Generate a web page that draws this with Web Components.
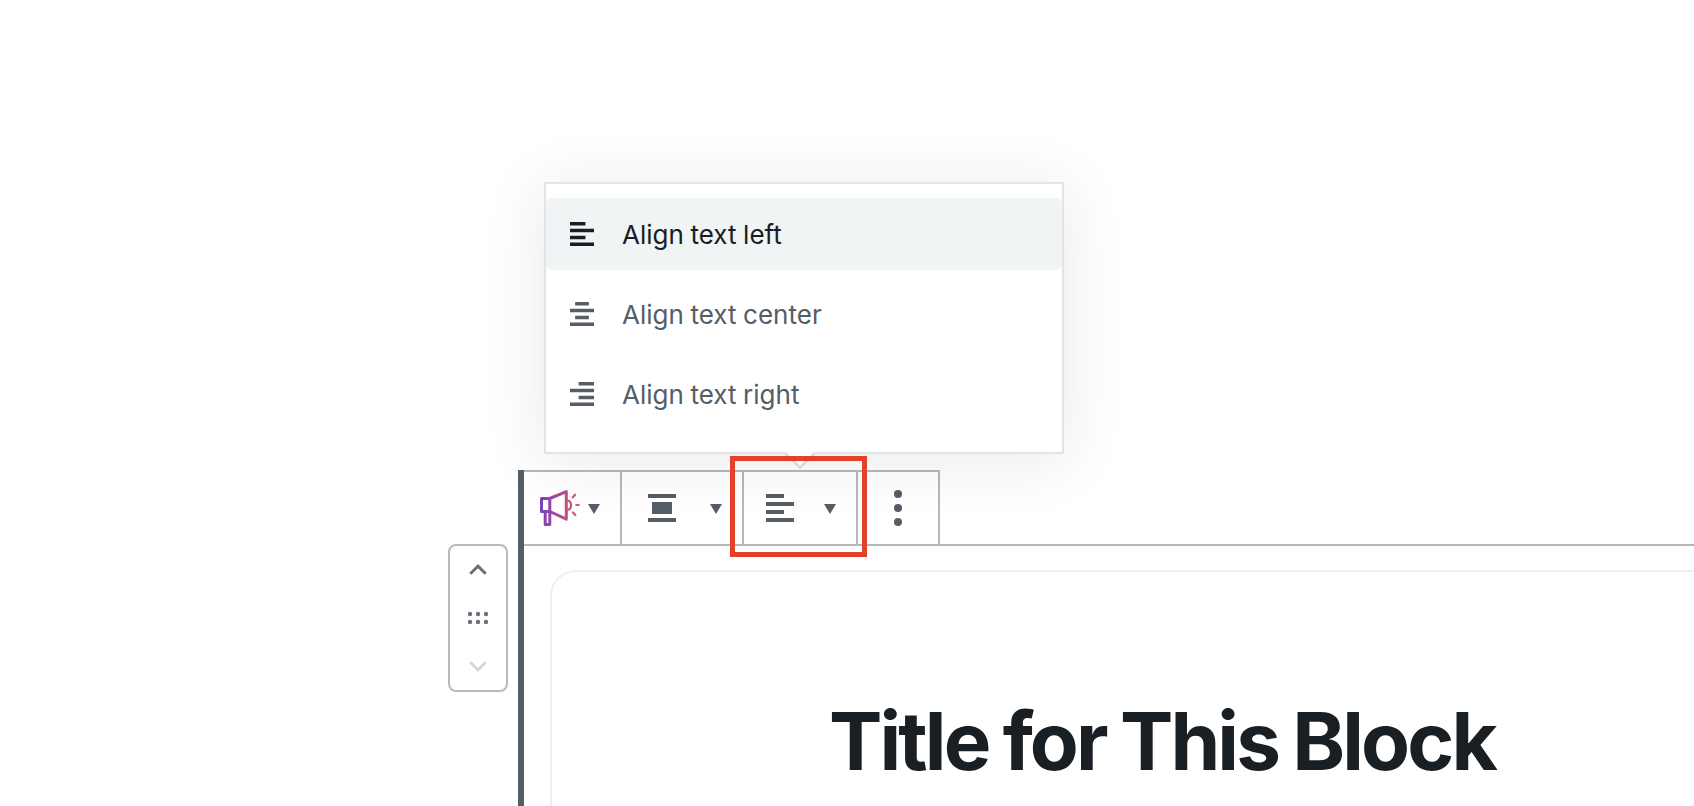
<!DOCTYPE html>
<html lang="en">
<head>
<meta charset="utf-8">
<title>Block editor</title>
<style>
html,body{margin:0;height:100%;overflow:hidden;background:#fff}
body{font-family:Inter,"Liberation Sans",sans-serif;color:#1a1f24}
</style>
</head>
<body>
<block-editor></block-editor>
<script>
const define = (name, html) => customElements.define(name, class extends HTMLElement {
  constructor() {
    super();
    const t = document.createElement('template');
    t.innerHTML = html;
    this.attachShadow({mode: 'open'}).append(t.content.cloneNode(true));
  }
});

const ALIGN = {
  left: 'M0 0h9v2H0zM0 4h14v2H0zM0 8h9v2H0zM0 12h14v2H0z',
  center: 'M3 0h8v2H3zM0 4h14v2H0zM3 8h8v2H3zM0 12h14v2H0z',
  right: 'M5 0h9v2H5zM0 4h14v2H0zM5 8h9v2H5zM0 12h14v2H0z',
  block: 'M0 0h14v2H0zM2 4h10v6H2zM0 12h14v2H0z'
};
customElements.define('align-icon', class extends HTMLElement {
  constructor() {
    super();
    this.attachShadow({mode: 'open'}).innerHTML = `
      <style>:host{display:block;width:28px;height:28px;flex:none}svg{display:block;width:100%;height:100%}</style>
      <svg viewBox="0 0 14 14" fill="currentColor"><path d="${ALIGN[this.getAttribute('kind')]}"/></svg>`;
  }
});

define('drop-arrow', `
<style>:host{display:block;width:12px;height:10px;flex:none;margin-top:2px}svg{display:block}</style>
<svg width="12" height="10" fill="currentColor"><path d="M0 0h12L6 10z"/></svg>`);

define('megaphone-icon', `
<style>:host{display:block;width:40px;height:38px;flex:none}svg{display:block}</style>
<svg width="40" height="38" viewBox="0 0 40 38" fill="none" stroke="url(#g)" stroke-width="3" stroke-linejoin="round" stroke-linecap="round">
<defs><linearGradient id="g" gradientUnits="userSpaceOnUse" x1="0" y1="0" x2="40" y2="0"><stop stop-color="#7b3fc2"/><stop offset=".65" stop-color="#bd5082"/><stop offset="1" stop-color="#d9606c"/></linearGradient></defs>
<path d="M1.500 9.500h8.300v13H1.500zM9.800 9.500L26.300 2.600v27.600L9.800 22.500M5.200 22.500v13h4.600v-13"/>
<path d="M27.500 11.500c4.700 .500 4.700 9 0 9.500M32.800 8.300l2.300-2.600M36.300 16h2.500M33 23.500l2.300 2.500" stroke-width="2.200"/></svg>`);

define('tool-group', `
<style>:host{display:flex;align-items:center;box-sizing:border-box;height:72px;border-right:2px solid #b4b9be;color:#555d66}</style><slot></slot>`);

define('block-toolbar', `
<style>
:host{display:flex;box-sizing:border-box;width:416px;height:74px;border-top:2px solid #b4b9be}
.a{width:98px;padding-left:16px;gap:8px}.b{width:122px;padding-left:26px;gap:34px}
.c{width:114px;padding-left:22px;gap:30px}.d{width:82px;padding-left:36px}
svg{display:block}
</style>
<tool-group class="a"><megaphone-icon></megaphone-icon><drop-arrow></drop-arrow></tool-group>
<tool-group class="b"><align-icon kind="block"></align-icon><drop-arrow></drop-arrow></tool-group>
<tool-group class="c"><align-icon kind="left"></align-icon><drop-arrow></drop-arrow></tool-group>
<tool-group class="d"><svg width="8" height="36" fill="currentColor"><circle cx="4" cy="4" r="4"/><circle cx="4" cy="18" r="4"/><circle cx="4" cy="32" r="4"/></svg></tool-group>`);

define('block-mover', `
<style>:host{display:block;box-sizing:border-box;width:60px;height:148px;border:2px solid #b5bcbe;border-radius:8px;background:#fff}svg{display:block}</style>
<svg width="56" height="144" fill="none" stroke-width="3">
<path d="M20.300 27.700L28 20.200l7.700 7.500" stroke="#6b7078"/>
<g fill="#6b7078"><circle cx="20" cy="68" r="2.200"/><circle cx="28" cy="68" r="2.200"/><circle cx="36" cy="68" r="2.200"/><circle cx="20" cy="76" r="2.200"/><circle cx="28" cy="76" r="2.200"/><circle cx="36" cy="76" r="2.200"/></g>
<path d="M20.300 116.300l7.700 7.500 7.700-7.500" stroke="#d5d8da"/></svg>`);

define('content-block', `
<style>
:host{display:block;flex:1;box-sizing:border-box;border-left:6px solid #555d66}
.body{box-sizing:border-box;height:262px;border-top:2px solid #b4b9be;padding:24px 0 0 26px;overflow:hidden}
.card{box-sizing:border-box;height:300px;width:1200px;border:2px solid #edeff0;border-radius:26px;padding:120px 0 0 277px}
h2{margin:0;font-size:80px;line-height:97px;font-weight:700;letter-spacing:-2.900px;word-spacing:-1.800px;white-space:nowrap}
</style>
<block-toolbar></block-toolbar>
<div class="body"><div class="card"><h2><slot></slot></h2></div></div>`);

define('menu-option', `
<style>
:host{display:flex;align-items:center;box-sizing:border-box;height:72px;padding-left:24px;gap:28px;border-radius:6px;color:#555d66;font-size:26px;word-spacing:-.700px;white-space:nowrap}
:host([active]){background:#f0f4f5;color:#191e23}
::slotted(align-icon){width:24px;height:24px}
</style><slot name="icon"></slot><span><slot></slot></span>`);

define('align-menu', `
<style>
:host{display:flex;flex-direction:column;gap:8px;box-sizing:border-box;width:520px;height:272px;border:2px solid #e2e4e7;background:#fff;padding-top:14px;box-shadow:0 6px 60px rgba(25,35,60,.1)}
.tip{position:absolute;left:239px;top:266px}
</style>
<menu-option active><align-icon slot="icon" kind="left"></align-icon>Align text left</menu-option>
<menu-option><align-icon slot="icon" kind="center"></align-icon>Align text center</menu-option>
<menu-option><align-icon slot="icon" kind="right"></align-icon>Align text right</menu-option>
<svg class="tip" width="30" height="22"><path d="M0 0H30V3L15 18 0 3z" fill="#fff"/><path d="M0 3L15 17.500 30 3" fill="none" stroke="#dcdde0" stroke-width="3"/></svg>`);

define('block-editor', `
<style>
:host{display:flex;position:relative;width:1694px;height:806px;overflow:hidden;padding-left:448px;box-sizing:border-box}
block-mover{margin-top:544px;flex:none}
content-block{margin:470px 0 0 10px}
align-menu{position:absolute;left:544px;top:182px}
.mark{position:absolute;left:730px;top:456px;width:137px;height:101px;box-sizing:border-box;border:5px solid #e4412b}
</style>
<block-mover></block-mover>
<content-block>Title for This Block</content-block>
<align-menu></align-menu>
<div class="mark"></div>`);
</script>
</body>
</html>
